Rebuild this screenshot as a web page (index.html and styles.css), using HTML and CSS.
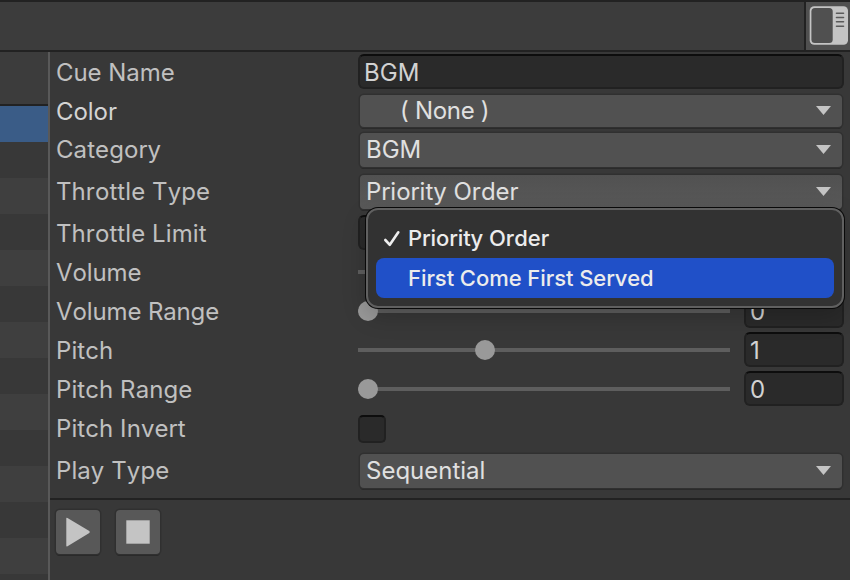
FILE: index.html
```html
<!DOCTYPE html>
<html lang="en">
<head>
<meta charset="utf-8">
<title>Cue Inspector</title>
<link rel="stylesheet" href="styles.css">
</head>
<body>
<div class="window">
  <header class="toolbar">
    <button class="panel-toggle" aria-label="Toggle inspector">
      <svg width="40" height="40" viewBox="0 0 40 40">
        <rect x="0.7" y="0.2" width="38.3" height="38.6" rx="4.5" fill="#c4c4c4"/>
        <rect x="2.4" y="2" width="21.3" height="35" rx="3.5" fill="#505050"/>
        <path d="M27.5 7.3h7M27.5 11.5h7M27.5 15.8h7M27.5 20.2h7" stroke="#5a5a5a" stroke-width="1.6" stroke-linecap="round"/>
      </svg>
    </button>
  </header>
  <div class="body">
    <aside class="cue-list">
      <div class="list-head"></div>
      <div class="item selected"></div>
      <div class="item"></div><div class="item"></div><div class="item"></div>
      <div class="item"></div><div class="item"></div><div class="item"></div>
      <div class="item"></div><div class="item"></div><div class="item"></div>
      <div class="item"></div><div class="item"></div><div class="item"></div>
    </aside>
    <main class="inspector">
      <div class="form">
        <div class="row name"><label>Cue Name</label><div class="field">BGM</div></div>
        <div class="row color"><label>Color</label><div class="select">( None )<i class="arrow"></i></div></div>
        <div class="row category"><label>Category</label><div class="select">BGM<i class="arrow"></i></div></div>
        <div class="row throttle">
          <label>Throttle Type</label>
          <div class="select open">Priority Order<i class="arrow"></i></div>
          <div class="menu">
            <div class="option"><svg class="check" width="18" height="18" viewBox="0 0 18 18"><path d="M2.3 10L6.8 14.8L15.3 2.3" fill="none" stroke="#eee" stroke-width="2.6" stroke-linecap="round" stroke-linejoin="round"/></svg>Priority Order</div>
            <div class="option active">First Come First Served</div>
          </div>
        </div>
        <div class="row limit"><label>Throttle Limit</label><div class="field"></div></div>
        <div class="row volume"><label>Volume</label><div class="slider"></div><div class="field">1</div></div>
        <div class="row volume"><label>Volume Range</label><div class="slider"><i class="knob"></i></div><div class="field">0</div></div>
        <div class="row"><label>Pitch</label><div class="slider"><i class="knob third"></i></div><div class="field">1</div></div>
        <div class="row"><label>Pitch Range</label><div class="slider"><i class="knob"></i></div><div class="field">0</div></div>
        <div class="row invert"><label>Pitch Invert</label><div class="checkbox"></div></div>
        <div class="row play-type"><label>Play Type</label><div class="select">Sequential<i class="arrow"></i></div></div>
      </div>
      <footer class="transport">
        <button aria-label="Play"><svg width="44" height="44" viewBox="0 0 44 44"><path d="M10.3 8.2Q10.3 7.2 11.5 8L33.3 21Q34.3 22 33.3 23L11.5 36.3Q10.3 37 10.3 35.8Z" fill="#c4c4c4"/></svg></button>
        <button aria-label="Stop"><svg width="44" height="44" viewBox="0 0 44 44"><rect x="10.3" y="10.3" width="23.4" height="23.4" fill="#c4c4c4"/></svg></button>
      </footer>
    </main>
  </div>
</div>
</body>
</html>
```
FILE: styles.css
```css
* { box-sizing: border-box; }
body {
  margin: 0;
  background: #383838;
  color: #c0c0c0;
  font: 24px/30px Inter, sans-serif;
  font-kerning: none;
  letter-spacing: 0.08px;
}
button { padding: 0; border: 0; }
svg { display: block; }
.window {
  width: 850px;
  height: 580px;
  overflow: hidden;
  display: flex;
  flex-direction: column;
}
.toolbar {
  flex: 0 0 52px;
  display: flex;
  justify-content: flex-end;
  background: #3c3c3c;
  border-top: 2px solid #222;
  border-bottom: 2px solid #222;
}
.panel-toggle {
  display: flex;
  align-items: flex-start;
  width: 46px;
  padding: 4px 0 0 3px;
  background: #505050;
  border-left: 2px solid #222;
}
.panel-toggle svg { flex: none; }
.body { display: flex; flex: 1; min-height: 0; }
.cue-list {
  width: 50px;
  overflow: hidden;
  border-right: 2px solid #595959;
}
.list-head {
  height: 54px;
  background: #3c3c3c;
  border-bottom: 2px solid #222;
}
.item { height: 36px; background: #383838; }
.item:nth-child(even) { background: #3f3f3f; }
.item.selected { background: #3a5c87; }
.inspector { flex: 1; }
.form {
  height: 448px;
  border-bottom: 2px solid #222;
}
.row {
  position: relative;
  display: grid;
  grid-template-columns: 302px 1fr 100px;
  align-items: start;
  height: 39px;
  padding: 0 6px;
}
.row > label { padding-top: 5px; white-space: nowrap; }
.row > .field { margin-top: 1px; }
.name .field, .limit .field, .select { grid-column: 2 / 4; }
.name { height: 40px; }
.row.name > .field { margin-top: 2px; }
.color { height: 38px; color: #d4d4d4; }
.category { height: 41px; }
.throttle { height: 42px; }
.limit { height: 40px; }
.row.limit > .field { margin-top: 2px; }
.row.name > label,
.row.throttle > label,
.row.limit > label,
.row.play-type > label { padding-top: 6px; }
.row.name > label, .row.color > label { letter-spacing: -0.05px; }
.row.volume > label { letter-spacing: -0.12px; }
.invert { height: 41px; }
.field {
  height: 35px;
  padding: 2px 0 0 4px;
  background: #2a2a2a;
  border: 2px solid #212121;
  border-top-color: #0d0d0d;
  border-radius: 6px;
  color: #d2d2d2;
  line-height: 29px;
}
.select {
  display: flex;
  align-items: center;
  justify-content: space-between;
  height: 34px;
  margin: 2px 2px 0;
  padding: 0 11px 0 6px;
  background: #515151;
  border-radius: 4px;
  box-shadow: 0 0 0 1.5px #303030, 0 2px 0 0 #242424;
  color: #e0e0e0;
  letter-spacing: 0;
}
.color .select { height: 32px; margin-top: 3px; padding-left: 40px; letter-spacing: -0.3px; }
.category .select { margin-top: 3px; }
.throttle .select { margin-top: 4px; }
.play-type .select { margin-top: 4px; }
.select.open { background: linear-gradient(#515151, #595959); }
.arrow {
  width: 15px;
  height: 9px;
  margin-bottom: 1px;
  background: #c4c4c4;
  clip-path: polygon(0 0, 100% 0, 50% 100%);
}
.slider {
  display: flex;
  align-items: center;
  height: 20px;
  margin: 9px 14px 0 0;
  background: linear-gradient(#5e5e5e, #5e5e5e) center / 100% 4px no-repeat;
}
.knob { width: 20px; height: 20px; background: #999; border-radius: 50%; }
.knob.third { margin-left: 117px; }
.checkbox {
  width: 28px;
  height: 28px;
  margin-top: 6px;
  background: #2a2a2a;
  border: 2px solid #212121;
  border-top-color: #0d0d0d;
  border-radius: 5px;
}
.menu {
  position: absolute;
  z-index: 2;
  top: 37px;
  left: 316px;
  width: 478px;
  height: 100px;
  padding: 8px;
  background: #323232;
  border: 2px solid #606060;
  border-radius: 12px;
  box-shadow: 0 0 0 1px #090909, 0 8px 24px rgba(0, 0, 0, 0.2);
  color: #ececec;
  font-size: 22px;
  font-weight: 500;
  letter-spacing: -0.06px;
}
.option {
  position: relative;
  height: 40px;
  padding-left: 32px;
  border-radius: 8px;
  line-height: 40px;
}
.option.active { background: #2050c8; }
.check { position: absolute; left: 7px; top: 12px; }
.transport { display: flex; gap: 16px; padding: 10px 6px; }
.transport button {
  width: 44px;
  height: 44px;
  background: #585858;
  border-radius: 4px;
  box-shadow: 0 0 0 1.5px #303030, 0 2px 0 0 #242424;
}
```
